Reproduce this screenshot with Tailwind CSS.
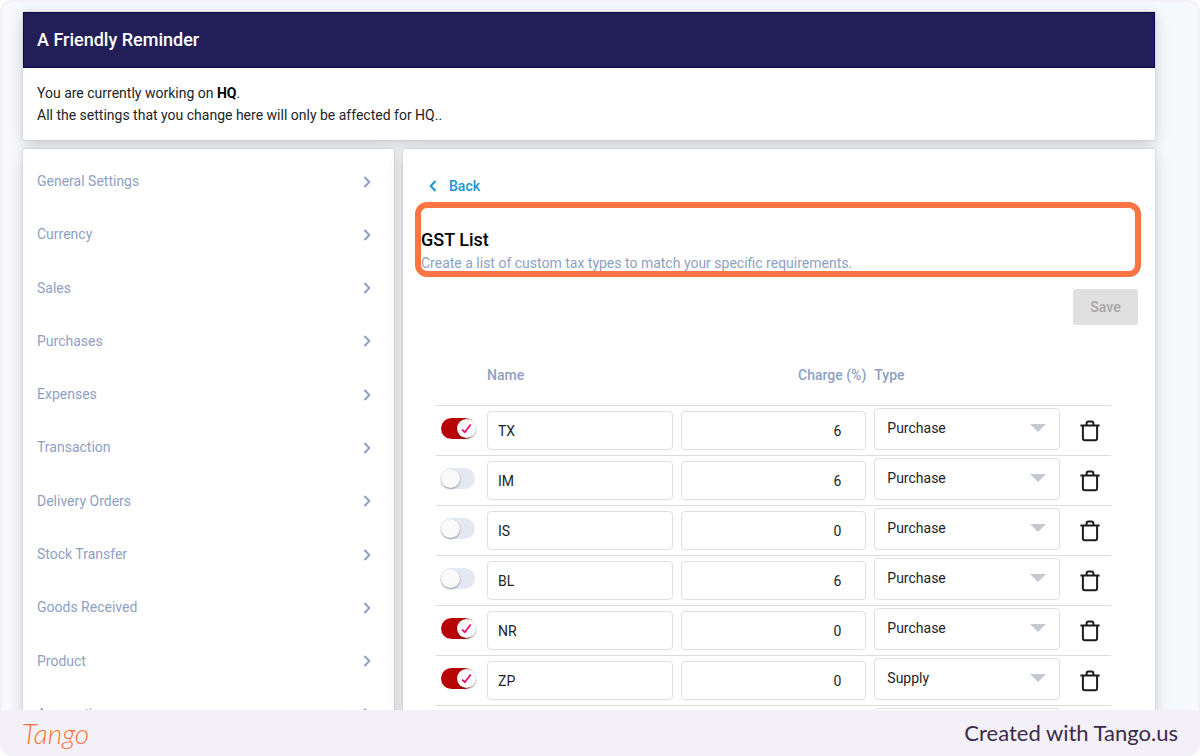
<!DOCTYPE html>
<html lang="en">
<head>
  <meta charset="UTF-8" />
  <meta name="viewport" content="width=device-width, initial-scale=1.0" />
  <title>GST List</title>
  <script src="https://cdn.jsdelivr.net/npm/@tailwindcss/browser@4"></script>
</head>
<body class="bg-white font-['Roboto',sans-serif] text-[14px] text-[#212529]">

  <!-- shared icons -->
  <svg class="hidden">
    <symbol id="icon-chevron" viewBox="0 0 8 12">
      <path d="M1.5 1 6.3 6l-4.8 5" fill="none" stroke="currentColor" stroke-width="2" />
    </symbol>
    <symbol id="icon-check" viewBox="0 0 12 12">
      <path d="M1.2 7.2 4.2 10 10.6 1.6" fill="none" stroke="currentColor" stroke-width="1.9" />
    </symbol>
    <symbol id="icon-trash" viewBox="0 0 20 22">
      <path d="M6.6 5V3.4q0-1.9 1.9-1.9h3q1.9 0 1.9 1.9V5M.4 5.5h19.2M2.9 5.5v12.8q0 2 2 2h10.2q2 0 2-2V5.5" fill="none" stroke="currentColor" stroke-width="2" />
    </symbol>
  </svg>

  <div class="flex h-screen flex-col overflow-hidden rounded-xl bg-[#f3f1f7]">
    <main class="min-h-0 flex-1 overflow-hidden rounded-t-xl border-2 border-b-0 border-[#f3f1f7] bg-[#f8f9fd] pt-[10px] pr-[43px] pl-[21px]">

      <section class="rounded-b-xs bg-white shadow-[0_4px_16px_rgba(0,0,0,0.18),0_0_2px_rgba(0,0,0,0.2)]">
        <h1 class="border border-[#0b0650] bg-[#221f58] px-[13px] py-[14px] text-[18px] leading-[26px] font-medium text-white">A Friendly Reminder</h1>
        <p class="px-[14px] pt-[14px] pb-[14px] leading-[22px]">
          You are currently working on <b class="text-black">HQ</b>.<br />
          All the settings that you change here will only be affected for HQ..
        </p>
      </section>

      <div class="mt-[9px] flex items-start gap-[9px]">
        <nav class="w-[371px] shrink-0 rounded-t-xs bg-white pt-[6px] shadow-[0_4px_16px_rgba(0,0,0,0.18),0_0_2px_rgba(0,0,0,0.2)]">
          <ul id="menu" class="grid h-[586px] grid-rows-11 text-[#8f9fc4]"></ul>
        </nav>

        <section class="min-w-0 flex-1 rounded-t-xs bg-white pt-[26px] pr-[14px] pl-3 shadow-[0_4px_16px_rgba(0,0,0,0.18),0_0_2px_rgba(0,0,0,0.2)]">
          <a href="#" class="ml-[14px] flex h-[22px] w-fit items-center gap-3 font-medium text-[#1995d8]">
            <svg class="h-3 w-2 rotate-180"><use href="#icon-chevron" /></svg>
            Back
          </a>

          <div class="relative mt-[5px] px-[6px] pt-[26px] pb-[3px]">
            <h2 class="text-[18px] leading-6 font-medium text-black">GST List</h2>
            <p class="leading-[22px] text-[#8f9fc4]">Create a list of custom tax types to match your specific requirements.</p>
            <div class="absolute inset-0 rounded-xl border-6 border-[#ff7442]"></div>
          </div>

          <div class="mt-3 flex justify-end pr-[3px]">
            <button type="button" disabled class="h-9 w-[65px] rounded-xs bg-[#e0e0e0] font-medium text-[#a6a6a6]">Save</button>
          </div>

          <div class="mt-[21px] pr-[30px] pl-[21px]">
            <table class="w-full table-fixed border-separate border-spacing-0">
              <thead>
                <tr class="h-[60px] text-[#8f9fc4]">
                  <th class="w-[47px] border-b border-[#dcdddf]"></th>
                  <th class="border-b border-[#dcdddf] px-1 text-left font-medium">Name</th>
                  <th class="border-b border-[#dcdddf] px-1 text-right font-medium">Charge (%)</th>
                  <th class="border-b border-[#dcdddf] px-1 text-left font-medium">Type</th>
                  <th class="w-[47px] border-b border-[#dcdddf]"></th>
                </tr>
              </thead>
              <tbody id="taxes"></tbody>
            </table>
          </div>
        </section>
      </div>
    </main>

    <footer class="flex h-[46px] shrink-0 items-center justify-between px-[22px]">
      <a href="#" class="font-['Lato',sans-serif] text-[28px] leading-none font-light text-[#ff7442] italic">Tango</a>
      <span class="font-['Lato',sans-serif] text-[22px] leading-none text-[#3b2a4d]">Created with Tango.us</span>
    </footer>
  </div>

  <script>
    const menuItems = [
      "General Settings", "Currency", "Sales", "Purchases", "Expenses", "Transaction",
      "Delivery Orders", "Stock Transfer", "Goods Received", "Product", "Accounting"
    ];

    const taxes = [
      { name: "TX", charge: 6, type: "Purchase", active: true },
      { name: "IM", charge: 6, type: "Purchase", active: false },
      { name: "IS", charge: 0, type: "Purchase", active: false },
      { name: "BL", charge: 6, type: "Purchase", active: false },
      { name: "NR", charge: 0, type: "Purchase", active: true },
      { name: "ZP", charge: 0, type: "Supply", active: true },
      { name: "ZR", charge: 0, type: "Supply", active: true }
    ];

    document.getElementById("menu").innerHTML = menuItems.map((item) => `
      <li class="flex">
        <a href="#" class="flex flex-1 items-center justify-between pr-[23px] pl-[14px]">
          ${item}
          <svg class="h-3 w-2"><use href="#icon-chevron" /></svg>
        </a>
      </li>`).join("");

    document.getElementById("taxes").innerHTML = taxes.map((tax) => `
      <tr class="h-[50px]">
        <td class="border-b border-[#dcdddf] pb-1 pl-[5px]">
          <label class="relative block h-[21px] w-[34px]">
            <input type="checkbox" aria-label="Enable ${tax.name}" ${tax.active ? "checked" : ""}
                   class="peer block h-[21px] w-[34px] appearance-none rounded-full bg-[#e3e8f2] before:absolute before:mt-px before:block before:size-[19px] before:rounded-full before:bg-[#fafafa] before:shadow-[0_1px_2px_rgba(0,0,0,0.4)] checked:bg-[#b70404] checked:before:ml-4">
            <svg class="absolute top-[5px] left-5 hidden size-[11px] text-[#ec0868] peer-checked:block"><use href="#icon-check" /></svg>
          </label>
        </td>
        <td class="border-b border-[#dcdddf] px-1">
          <input type="text" aria-label="Name" value="${tax.name}" class="block h-[39px] w-full rounded border border-[#dedfe1] px-[10px]">
        </td>
        <td class="border-b border-[#dcdddf] px-1">
          <input type="text" inputmode="decimal" aria-label="Charge (%)" value="${tax.charge}" class="block h-[39px] w-full rounded border border-[#dedfe1] pr-6 text-right">
        </td>
        <td class="border-b border-[#dcdddf] px-1 pb-1">
          <div class="relative">
            <select aria-label="Type" class="block h-[42px] w-full appearance-none rounded border border-[#dedfe1] px-3">
              <option ${tax.type === "Purchase" ? "selected" : ""}>Purchase</option>
              <option ${tax.type === "Supply" ? "selected" : ""}>Supply</option>
            </select>
            <svg viewBox="0 0 16 8" class="pointer-events-none absolute top-4 right-[14px] h-2 w-4 fill-[#c3c8d1]"><path d="M0 0h16L8 8z" /></svg>
          </div>
        </td>
        <td class="border-b border-[#dcdddf] pl-4">
          <button type="button" aria-label="Delete ${tax.name}" class="block text-[#1c1c1c]">
            <svg class="h-[22px] w-5"><use href="#icon-trash" /></svg>
          </button>
        </td>
      </tr>`).join("");
  </script>
</body>
</html>
